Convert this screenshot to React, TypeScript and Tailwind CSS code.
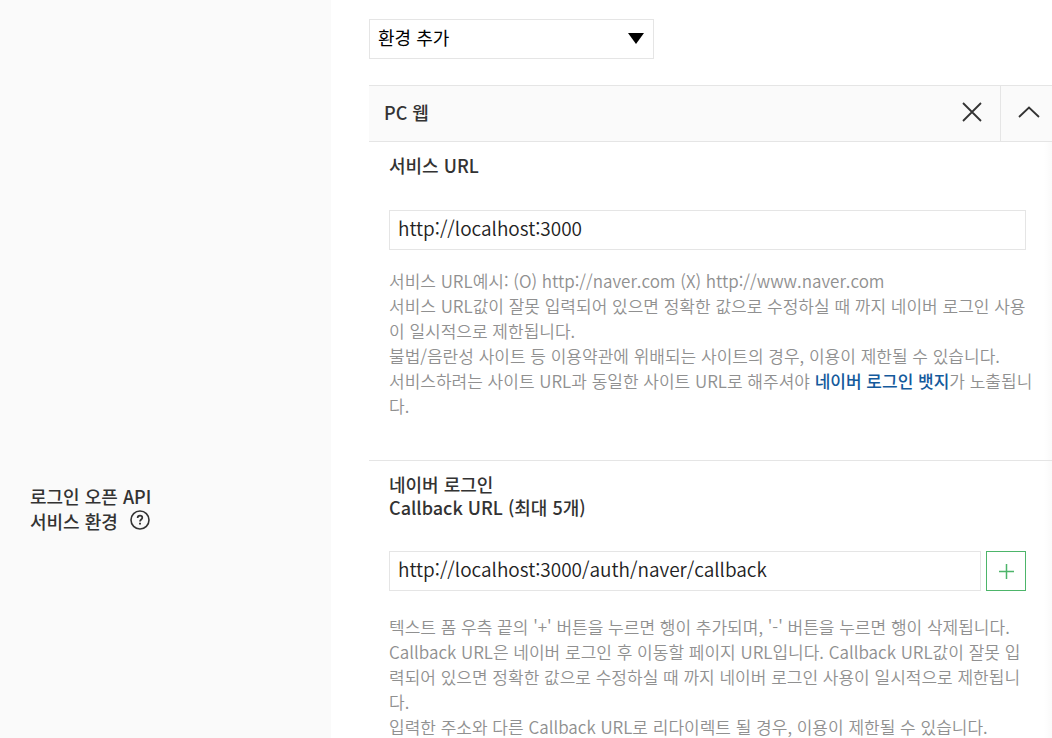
import { useState } from "react";

const inputClass =
    "h-10 min-w-0 flex-1 border border-[#e5e5e5] bg-white px-2 pb-[6px] text-[19px] font-[350] text-[#222] outline-none focus:border-[#4db56a]";

const EnvironmentSelect = () => (
    <div className="relative w-[285px]">
        <select
            aria-label="환경 추가"
            defaultValue=""
            className="block h-10 w-full appearance-none border border-[#e5e5e5] bg-white px-2 pb-1 text-lg text-black outline-none"
        >
            <option value="">환경 추가</option>
            <option value="pc">PC 웹</option>
        </select>
        <svg
            viewBox="0 0 16 11"
            className="pointer-events-none absolute top-[14px] right-[10px] h-[11px] w-4"
            aria-hidden="true"
        >
            <path d="M0 0H16L8 11Z" fill="#000" />
        </svg>
    </div>
);

const PanelHeader = ({ isOpen, onToggle }: { isOpen: boolean; onToggle: () => void }) => (
    <div className="flex h-[57px] items-stretch border-y border-[#e5e5e5] bg-[#fafafa]">
        <h2 className="flex-1 self-center pb-1 pl-[15px] text-lg leading-6 font-medium text-[#333]">PC 웹</h2>
        <button type="button" aria-label="삭제" className="flex w-14 items-center justify-center pb-1">
            <svg viewBox="0 0 20 20" className="h-5 w-5" fill="none" stroke="#333" strokeWidth="1.8">
                <path d="M1 1L19 19M19 1L1 19" />
            </svg>
        </button>
        <button
            type="button"
            aria-label="접기"
            aria-expanded={isOpen}
            onClick={onToggle}
            className="flex w-[52px] items-center justify-center border-l border-[#e5e5e5] pb-1 pl-1"
        >
            <svg viewBox="0 0 22 12" className="h-3 w-[22px]" fill="none" stroke="#333" strokeWidth="1.8">
                <path d="M1 11L11 1.5L21 11" />
            </svg>
        </button>
    </div>
);

export default function App() {
    const [isOpen, setIsOpen] = useState(true);
    const [serviceUrl, setServiceUrl] = useState("http://localhost:3000");
    const [callbackUrl, setCallbackUrl] = useState("http://localhost:3000/auth/naver/callback");

    return (
        <div
            lang="ko"
            className="flex min-h-screen bg-white font-['Noto_Sans_CJK_KR','Noto_Sans',sans-serif] text-[#333]"
        >
            <aside className="w-[331px] shrink-0 bg-[#fafafa] pt-[484px] pl-[30px]">
                <h1 className="text-lg leading-[25px] font-medium">
                    로그인 오픈 API
                    <br />
                    <span className="flex items-center gap-3">
                        서비스 환경
                        <button type="button" aria-label="도움말" className="pb-1">
                            <svg viewBox="0 0 20 20" className="block h-5 w-5" fill="none" stroke="#333">
                                <circle cx="10" cy="10" r="9" strokeWidth="1.6" />
                                <path
                                    d="M7.6 8.1C7.6 6.5 8.6 5.7 10 5.7C11.4 5.7 12.3 6.5 12.3 7.7C12.3 9.5 10 9.5 10 11.6"
                                    strokeWidth="1.7"
                                />
                                <path d="M10 12.8V14.6" strokeWidth="1.9" />
                            </svg>
                        </button>
                    </span>
                </h1>
            </aside>

            <main className="min-w-0 flex-1 pt-[19px] pl-[38px]">
                <EnvironmentSelect />

                <div className="mt-[26px]">
                    <PanelHeader isOpen={isOpen} onToggle={() => setIsOpen(!isOpen)} />

                    {isOpen && (
                        <div className="bg-[linear-gradient(to_left,#fafafa,#fff_8px)]">
                            <section className="border-b border-[#e5e5e5] pt-3 pr-[26px] pb-[42px] pl-5">
                                <label htmlFor="serviceUrl" className="block text-lg leading-[23px] font-medium">
                                    서비스 URL
                                </label>
                                <div className="mt-[33px] flex">
                                    <input
                                        id="serviceUrl"
                                        type="text"
                                        value={serviceUrl}
                                        onChange={(e) => setServiceUrl(e.target.value)}
                                        className={inputClass}
                                    />
                                </div>
                                <p className="mt-[18px] -mr-3 text-[17px] leading-[25px] font-[350] text-[#909090]">
                                    서비스 URL예시: (O) http://naver.com (X) http://www.naver.com
                                    <br />
                                    서비스 URL값이 잘못 입력되어 있으면 정확한 값으로 수정하실 때 까지 네이버 로그인 사용이
                                    일시적으로 제한됩니다.
                                    <br />
                                    불법/음란성 사이트 등 이용약관에 위배되는 사이트의 경우, 이용이 제한될 수 있습니다.
                                    <br />
                                    서비스하려는 사이트 URL과 동일한 사이트 URL로 해주셔야{" "}
                                    <a href="#badge" className="font-medium text-[#145a9c]">
                                        네이버 로그인 뱃지
                                    </a>
                                    가 노출됩니다.
                                </p>
                            </section>

                            <section className="pt-3 pr-[26px] pl-5">
                                <label htmlFor="callbackUrl" className="block text-lg leading-[23px] font-medium">
                                    네이버 로그인
                                    <br />
                                    Callback URL (최대 5개)
                                </label>
                                <div className="mt-8 flex gap-[5px]">
                                    <input
                                        id="callbackUrl"
                                        type="text"
                                        value={callbackUrl}
                                        onChange={(e) => setCallbackUrl(e.target.value)}
                                        className={inputClass}
                                    />
                                    <button
                                        type="button"
                                        aria-label="추가"
                                        className="flex h-10 w-10 items-center justify-center border border-[#4db56a]"
                                    >
                                        <svg viewBox="0 0 15 15" className="h-[15px] w-[15px]" stroke="#4db56a" strokeWidth="1.5">
                                            <path d="M0 7.5H15M7.5 0V15" />
                                        </svg>
                                    </button>
                                </div>
                                <p className="mt-[23px] text-[17px] leading-[25px] font-[350] text-[#909090]">
                                    텍스트 폼 우측 끝의 '+' 버튼을 누르면 행이 추가되며, '-' 버튼을 누르면 행이 삭제됩니다.
                                    <br />
                                    Callback URL은 네이버 로그인 후 이동할 페이지 URL입니다. Callback URL값이 잘못 입력되어
                                    있으면 정확한 값으로 수정하실 때 까지 네이버 로그인 사용이 일시적으로 제한됩니다.
                                    <br />
                                    입력한 주소와 다른 Callback URL로 리다이렉트 될 경우, 이용이 제한될 수 있습니다.
                                </p>
                            </section>
                        </div>
                    )}
                </div>
            </main>
        </div>
    );
}
